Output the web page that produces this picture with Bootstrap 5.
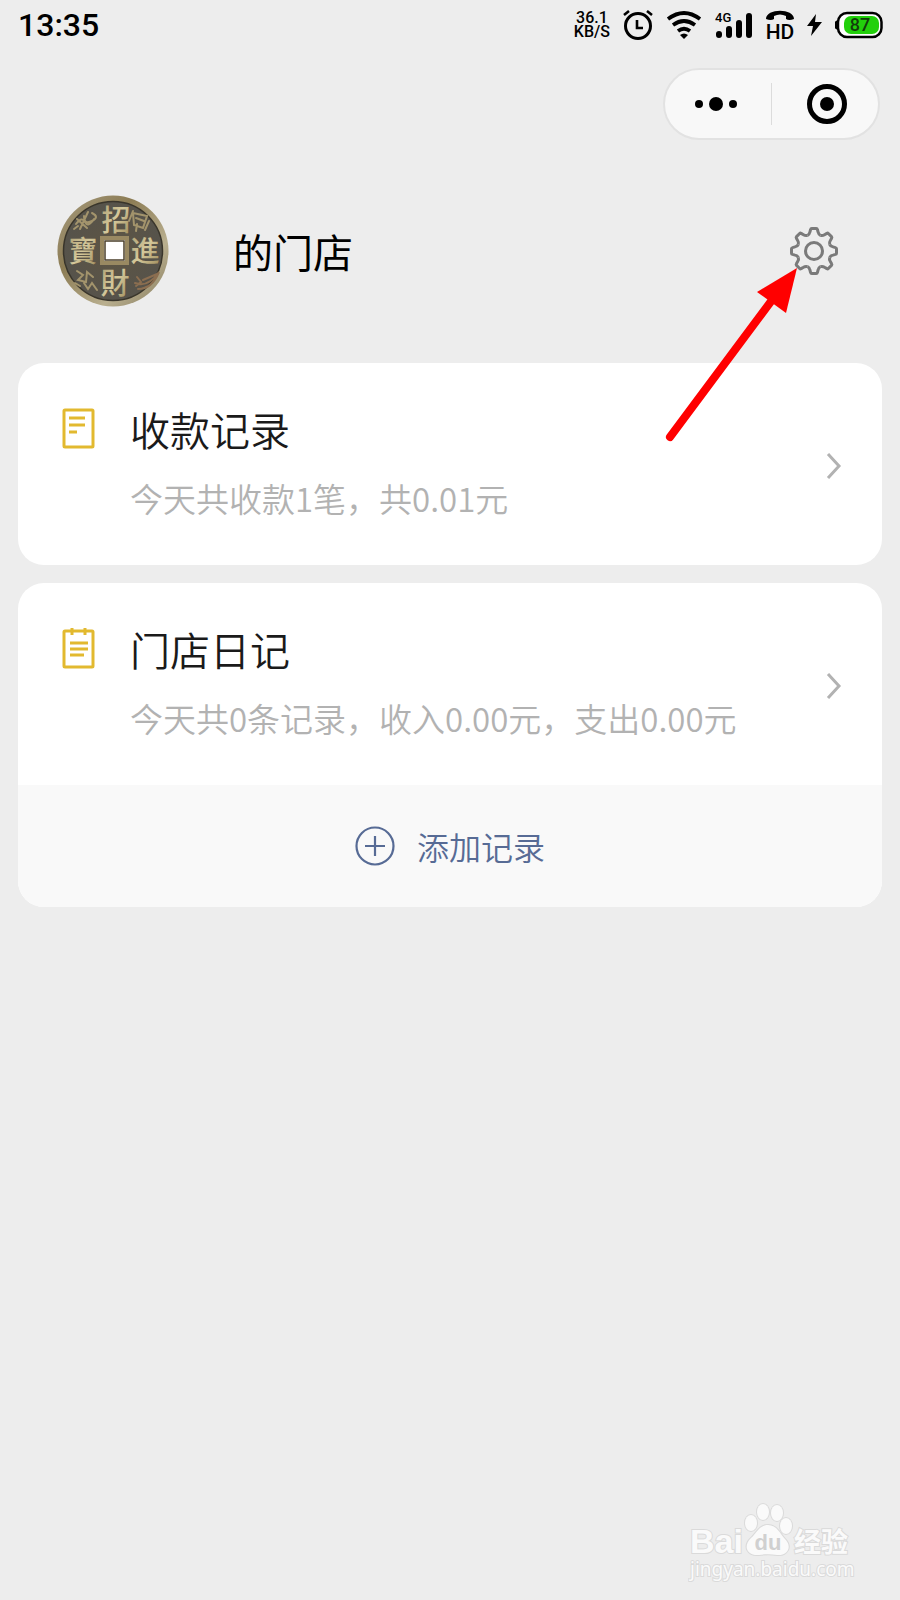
<!DOCTYPE html>
<html lang="zh-CN">
<head>
<meta charset="utf-8">
<meta name="viewport" content="width=device-width, initial-scale=1">
<title>的门店</title>
<link href="https://cdn.jsdelivr.net/npm/bootstrap@5.3.0/dist/css/bootstrap.min.css" rel="stylesheet">
<style>
body{background:#ededed;color:#000;font-family:"Noto Sans CJK SC",sans-serif}
svg{display:block;flex:none}
.status-bar{height:50px;padding:0 17px 0 18px;font-family:Roboto,sans-serif;font-weight:500}
.clock{font-size:32px;line-height:50px}
.status-icons{gap:13px}
.net-speed{font-size:16px;line-height:14px;text-align:center}
.capsule{width:217px;height:72px;border:2px solid #e2e2e2;border-radius:36px;background:#f8f8f8}
.capsule-row{padding:18px 20px 0}
.capsule button{border:0;background:none;padding:0;flex:1 1 0}
.capsule .split{width:1px;height:42px;background:#dcdcdc}
.store-head{padding:55px 61px 56px 57px}
.store-name{font-size:40px;line-height:56px;font-weight:400;margin-left:64px}
.pointer-arrow{position:absolute;right:100px;top:125px;pointer-events:none}
.panels{padding:0 18px;gap:18px}
.panel{border-radius:26px;background:#fff;overflow:hidden}
.entry{height:202px;padding:38px 40px 0 42px;color:inherit;text-decoration:none}
.entry-icon{margin-top:6px}
.entry-text{margin-left:34px}
.entry-title{font-size:40px;line-height:56px;color:#1a1a1a;font-weight:350}
.entry-note{font-size:33px;line-height:48px;margin-top:17px;color:#b2b2b2;font-weight:350}
.chevron{margin-top:52px}
.add-btn{height:122px;border:0;background:#f9f9f9;color:#576b95;font-size:32px;line-height:48px;gap:22px;font-weight:350}
.brand{padding:0 44px 14px 0}
</style>
</head>
<body>
<div class="d-flex flex-column min-vh-100 position-relative">
  <header class="status-bar d-flex align-items-center justify-content-between">
    <div class="clock">13:35</div>
    <div class="status-icons d-flex align-items-center">
      <div class="net-speed"><div>36.1</div><div>KB/S</div></div>
      <svg width="30" height="32" viewBox="0 0 30 32" fill="none" stroke="#000" stroke-width="3" role="img" aria-label="闹钟"><circle cx="15" cy="17" r="12.5"/><path d="M14 11v8h6M1 6l5-4M29 6l-5-4" stroke-width="2.6"/></svg>
      <svg width="36" height="30" viewBox="0 0 36 30" fill="none" stroke="#000" stroke-width="3.8" role="img" aria-label="无线网络"><path d="M2 9q16-12 32 0M7 15q11-8 22 0M12 21q6-4.5 12 0"/><path d="M14 25q4-3 8 0l-4 4z" fill="#000" stroke="none"/></svg>
      <svg width="38" height="30" viewBox="0 0 38 30" role="img" aria-label="信号"><text x="0" y="12" font-size="13">4G</text><g stroke="#000" stroke-width="6" stroke-linecap="round"><path d="M4 24v1M14 19v6M24 13v12M34 6v19"/></g></svg>
      <svg width="28" height="38" viewBox="0 0 28 38" role="img" aria-label="高清通话"><path d="M0 13C0 2 28 2 28 13q-5 2-8 0V10q-6-3-12 0v3q-3 2-8 0z"/><text x="14" y="33" font-size="21" text-anchor="middle">HD</text></svg>
      <svg width="15" height="24" viewBox="0 0 15 24" role="img" aria-label="充电中"><path d="M9 1L0 13h6L4 23l11-14H8z"/></svg>
      <svg width="48" height="28" viewBox="0 0 48 28" role="img" aria-label="电量"><path d="M3 9q-4 1-4 5t4 5z"/><rect x="3" y="2" width="43.500" height="24" rx="9" fill="#fff" stroke="#000" stroke-width="2.500"/><rect x="9" y="5" width="35" height="18" rx="7" fill="#22d00b"/><text x="25" y="20" font-size="18" text-anchor="middle" fill="#123d0c">87</text></svg>
    </div>
  </header>

  <div class="capsule-row d-flex justify-content-end">
    <div class="capsule d-flex align-items-center">
      <button type="button" class="d-flex justify-content-center pe-1" aria-label="更多"><svg width="44" height="16" viewBox="0 0 44 16"><circle cx="5" cy="8" r="4"/><circle cx="22" cy="8" r="7"/><circle cx="39" cy="8" r="4"/></svg></button>
      <span class="split"></span>
      <button type="button" class="d-flex justify-content-center ps-1" aria-label="关闭"><svg width="40" height="40" viewBox="0 0 40 40"><circle cx="20" cy="20" r="17.500" fill="none" stroke="#000" stroke-width="5"/><circle cx="20" cy="20" r="7"/></svg></button>
    </div>
  </div>

  <section class="store-head d-flex align-items-center position-relative">
    <svg width="112" height="112" viewBox="0 0 112 112" role="img" aria-label="招财进宝铜钱">
      <defs>
        <linearGradient id="rim" x1="0" y1="0" x2="1" y2="1"><stop offset="0" stop-color="#a79c80"/><stop offset=".35" stop-color="#8c7c54"/><stop offset=".7" stop-color="#b9af8f"/><stop offset="1" stop-color="#857a5c"/></linearGradient>
        <linearGradient id="metal" x1="0" y1="0" x2="1" y2="1"><stop offset="0" stop-color="#a6976e"/><stop offset=".5" stop-color="#d5c99b"/><stop offset="1" stop-color="#9a8656"/></linearGradient>
        <radialGradient id="field"><stop offset="0" stop-color="#5e5543"/><stop offset="1" stop-color="#56534b"/></radialGradient>
      </defs>
      <circle cx="56" cy="56" r="55.500" fill="url(#rim)"/>
      <circle cx="56" cy="56" r="49.500" fill="url(#field)" stroke="#39352b" stroke-width="1.500"/>
      <g fill="url(#metal)" font-size="29" font-weight="500" text-anchor="middle">
        <text x="59" y="36">招</text><text x="88" y="67">進</text><text x="58" y="99">財</text><text x="26" y="67">寶</text>
      </g>
      <g fill="none" stroke="#a3946c" stroke-width="2" stroke-linecap="round">
        <path d="M19 29q6-8 9-2t9-3M20 24l10 9M31 17l-8 17M35 18q8 4 0 8t-8-5M17 34l4-3"/>
        <path d="M76 16l-4 10M76 18l14 3-4 12-9-3zM79 23l8 3M92 26l-4 9M80 29l-1 7"/>
        <path d="M20 76l6 4-5 5 8 2 1-10 6 5M27 88l4 6 4-6 5 7M18 88l5 3"/>
        <path d="M78 88q13 5 24-11-7 17-21 17M80 82l4 5-5 4M86 85l14-6" stroke="#8b6e50"/>
      </g>
      <rect x="45" y="43" width="25" height="25" fill="#fff" stroke="#998962" stroke-width="4"/>
      <rect x="48" y="46" width="19" height="19" fill="#fff" stroke="#4a3e29" stroke-width="1.500"/>
    </svg>
    <h1 class="store-name mb-0 me-auto">的门店</h1>
    <button type="button" class="btn p-0 border-0" aria-label="设置">
      <svg width="50" height="50" viewBox="-25 -25 50 50" fill="none" stroke="#7a7a7a" stroke-width="3">
        <defs><path id="tooth" d="M-6.500-15.700Q-4.600-16.600-4.100-19L-3.400-21.500Q-3.200-22.500-2.200-22.500H2.200Q3.200-22.500 3.400-21.500L4.100-19Q4.600-16.600 6.500-15.700"/></defs>
        <use href="#tooth"/><use href="#tooth" transform="rotate(45)"/><use href="#tooth" transform="rotate(90)"/><use href="#tooth" transform="rotate(135)"/><use href="#tooth" transform="rotate(180)"/><use href="#tooth" transform="rotate(225)"/><use href="#tooth" transform="rotate(270)"/><use href="#tooth" transform="rotate(315)"/>
        <circle r="8.500"/>
      </svg>
    </button>
    <svg class="pointer-arrow z-1" width="136" height="178" viewBox="0 0 136 178"><path d="M6 172L108 35" stroke="#f00" stroke-width="8" stroke-linecap="round"/><path d="M133 3L93 27l29 21z" fill="#f00"/></svg>
  </section>

  <main class="panels d-flex flex-column">
    <div class="panel">
      <a href="#receipts" class="entry d-flex align-items-start">
        <svg class="entry-icon" width="36" height="42" viewBox="0 0 36 42" fill="none" stroke="#e2b92f" stroke-width="3"><rect x="4" y="3" width="29" height="37" rx="1"/><path d="M9 11h16M9 18h16M9 25h8"/></svg>
        <span class="entry-text me-auto"><span class="entry-title d-block">收款记录</span><span class="entry-note d-block">今天共收款1笔，共0.01元</span></span>
        <svg class="chevron" width="16" height="26" viewBox="0 0 16 26" fill="none" stroke="#b2b2b2" stroke-width="3"><path d="M2 1l11 12L2 25"/></svg>
      </a>
    </div>
    <div class="panel">
      <a href="#diary" class="entry d-flex align-items-start">
        <svg class="entry-icon" width="36" height="42" viewBox="0 0 36 42" fill="none" stroke="#e2b92f" stroke-width="3"><rect x="4" y="4" width="29" height="36" rx="1"/><path d="M12 1v7M25 1v7M10 16h18M10 22h18M10 28h14"/></svg>
        <span class="entry-text me-auto"><span class="entry-title d-block">门店日记</span><span class="entry-note d-block">今天共0条记录，收入0.00元，支出0.00元</span></span>
        <svg class="chevron" width="16" height="26" viewBox="0 0 16 26" fill="none" stroke="#b2b2b2" stroke-width="3"><path d="M2 1l11 12L2 25"/></svg>
      </a>
      <button type="button" class="add-btn w-100 d-flex align-items-center justify-content-center">
        <svg width="40" height="40" viewBox="0 0 40 40" fill="none" stroke="#576b95" stroke-width="2.200"><circle cx="20" cy="20" r="18.500"/><path d="M20 10v20M10 20h20"/></svg>
        添加记录
      </button>
    </div>
  </main>

  <footer class="brand mt-auto d-flex justify-content-end">
    <svg width="168" height="85" viewBox="0 0 168 85" fill="#fafafa" stroke="#dadada" stroke-width="2" paint-order="stroke" role="img" aria-label="百度经验">
      <text x="2" y="52" font-family="Liberation Sans, sans-serif" font-weight="700" font-size="34">Bai</text>
      <ellipse cx="63" cy="22" rx="6" ry="8"/><ellipse cx="75" cy="11" rx="6" ry="8"/><ellipse cx="89" cy="12" rx="6" ry="8"/><ellipse cx="98" cy="25" rx="6" ry="8"/>
      <path d="M80 24c9 0 12 9 17 14 8 8 2 17-8 16-6-1-12-1-18 0-11 1-17-8-8-17 5-4 8-13 17-13z"/>
      <text x="80" y="49" text-anchor="middle" fill="#d0d0d0" stroke="none" font-family="Liberation Sans, sans-serif" font-weight="700" font-size="22">du</text>
      <text x="106" y="51" font-weight="700" font-size="27">经验</text>
      <text x="2" y="75" font-family="Noto Sans, sans-serif" font-size="19">jingyan.baidu.com</text>
    </svg>
  </footer>
</div>
<script src="https://cdn.jsdelivr.net/npm/bootstrap@5.3.0/dist/js/bootstrap.bundle.min.js"></script>
</body>
</html>
